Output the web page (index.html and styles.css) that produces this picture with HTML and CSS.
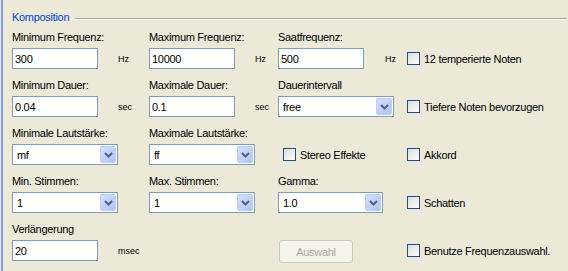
FILE: index.html
```html
<!DOCTYPE html>
<html lang="de">
<head>
  <meta charset="UTF-8">
  <title>Komposition</title>
  <link rel="stylesheet" href="styles.css">
</head>
<body>

<div class="frame">
  <div class="legend">
    <span class="legend-title">Komposition</span>
    <div class="legend-line"></div>
  </div>

  <div class="grid">
    <!-- Row 1 -->
    <div class="cell">
      <div class="label">Minimum Frequenz:</div>
      <div class="control"><input class="field" type="text" value="300"><span class="unit">Hz</span></div>
    </div>
    <div class="cell">
      <div class="label">Maximum Frequenz:</div>
      <div class="control"><input class="field" type="text" value="10000"><span class="unit">Hz</span></div>
    </div>
    <div class="cell">
      <div class="label">Saatfrequenz:</div>
      <div class="control"><input class="field" type="text" value="500"><span class="unit unit-wide">Hz</span></div>
    </div>
    <div class="cell">
      <div class="control"><span class="check"><span class="box"></span>12 temperierte Noten</span></div>
    </div>

    <!-- Row 2 -->
    <div class="cell">
      <div class="label">Minimum Dauer:</div>
      <div class="control"><input class="field" type="text" value="0.04"><span class="unit">sec</span></div>
    </div>
    <div class="cell">
      <div class="label">Maximale Dauer:</div>
      <div class="control"><input class="field" type="text" value="0.1"><span class="unit">sec</span></div>
    </div>
    <div class="cell">
      <div class="label">Dauerintervall</div>
      <div class="control">
        <div class="combo combo-long"><span class="combo-text">free</span><span class="arrow"><svg width="9" height="6" viewBox="0 0 9 6"><path d="M1 1 L4.5 4.5 L8 1" fill="none" stroke="#4d6185" stroke-width="2"/></svg></span></div>
      </div>
    </div>
    <div class="cell">
      <div class="control"><span class="check"><span class="box"></span>Tiefere Noten bevorzugen</span></div>
    </div>

    <!-- Row 3 -->
    <div class="cell">
      <div class="label">Minimale Lautstärke:</div>
      <div class="control">
        <div class="combo"><span class="combo-text">mf</span><span class="arrow"><svg width="9" height="6" viewBox="0 0 9 6"><path d="M1 1 L4.5 4.5 L8 1" fill="none" stroke="#4d6185" stroke-width="2"/></svg></span></div>
      </div>
    </div>
    <div class="cell">
      <div class="label">Maximale Lautstärke:</div>
      <div class="control">
        <div class="combo"><span class="combo-text">ff</span><span class="arrow"><svg width="9" height="6" viewBox="0 0 9 6"><path d="M1 1 L4.5 4.5 L8 1" fill="none" stroke="#4d6185" stroke-width="2"/></svg></span></div>
      </div>
    </div>
    <div class="cell">
      <div class="control"><span class="check check-inset"><span class="box"></span>Stereo Effekte</span></div>
    </div>
    <div class="cell">
      <div class="control"><span class="check"><span class="box"></span>Akkord</span></div>
    </div>

    <!-- Row 4 -->
    <div class="cell">
      <div class="label">Min. Stimmen:</div>
      <div class="control">
        <div class="combo"><span class="combo-text">1</span><span class="arrow"><svg width="9" height="6" viewBox="0 0 9 6"><path d="M1 1 L4.5 4.5 L8 1" fill="none" stroke="#4d6185" stroke-width="2"/></svg></span></div>
      </div>
    </div>
    <div class="cell">
      <div class="label">Max. Stimmen:</div>
      <div class="control">
        <div class="combo"><span class="combo-text">1</span><span class="arrow"><svg width="9" height="6" viewBox="0 0 9 6"><path d="M1 1 L4.5 4.5 L8 1" fill="none" stroke="#4d6185" stroke-width="2"/></svg></span></div>
      </div>
    </div>
    <div class="cell">
      <div class="label">Gamma:</div>
      <div class="control">
        <div class="combo combo-mid"><span class="combo-text">1.0</span><span class="arrow"><svg width="9" height="6" viewBox="0 0 9 6"><path d="M1 1 L4.5 4.5 L8 1" fill="none" stroke="#4d6185" stroke-width="2"/></svg></span></div>
      </div>
    </div>
    <div class="cell">
      <div class="control"><span class="check"><span class="box"></span>Schatten</span></div>
    </div>

    <!-- Row 5 -->
    <div class="cell">
      <div class="label">Verlängerung</div>
      <div class="control"><input class="field" type="text" value="20"><span class="unit">msec</span></div>
    </div>
    <div class="cell"></div>
    <div class="cell">
      <div class="control"><button class="btn" disabled>Auswahl</button></div>
    </div>
    <div class="cell">
      <div class="control"><span class="check"><span class="box"></span>Benutze Frequenzauswahl.</span></div>
    </div>
  </div>
</div>

</body>
</html>
```

FILE: styles.css
```css
body {
  margin: 0;
  background-color: #ece9d8;
  font-family: 'Liberation Sans', Arial, sans-serif;
  font-size: 11px;
  letter-spacing: -0.3px;
  color: #000000;
  height: 271px;
  overflow: hidden;
}

.frame {
  margin-left: 1px;
  border-left: 2px solid #7f9be3;
  padding: 10px 1px 0 9px;
  height: 261px;
}

.legend {
  display: flex;
  height: 14px;
}

.legend-title {
  color: #0046d5;
  line-height: 14px;
  margin-right: 6px;
}

.legend-line {
  flex: 1;
  margin-top: 8px;
  height: 0;
  border-top: 1px solid #aca899;
  border-bottom: 1px solid #ffffff;
}

.grid {
  display: grid;
  grid-template-columns: 137px 129px 129px 1fr;
  row-gap: 9px;
  margin-top: 6px;
}

.cell {
  display: flex;
  flex-direction: column;
  justify-content: flex-end;
}

.label {
  line-height: 14px;
  margin-bottom: 4px;
  white-space: nowrap;
}

.control {
  display: flex;
  align-items: center;
  height: 21px;
}

.field {
  box-sizing: border-box;
  width: 86px;
  height: 21px;
  margin: 0;
  padding: 0 2px;
  border: 1px solid #7f9db9;
  background: #ffffff;
  font-family: inherit;
  font-size: 11px;
  letter-spacing: -0.3px;
  color: #000000;
  outline: none;
}

.unit {
  margin-left: 20px;
  font-size: 9px;
  letter-spacing: 0;
}

.unit-wide {
  margin-left: 21px;
}

.combo {
  box-sizing: border-box;
  display: flex;
  align-items: center;
  width: 106px;
  height: 21px;
  border: 1px solid #7f9db9;
  background: #ffffff;
  padding: 1px;
}

.combo-long {
  width: 116px;
}

.combo-mid {
  width: 105px;
}

.combo-text {
  flex: 1;
  padding-left: 3px;
}

.arrow {
  box-sizing: border-box;
  width: 16px;
  height: 17px;
  display: flex;
  align-items: center;
  justify-content: center;
  border: 1px solid #bccdf6;
  border-radius: 2px;
  background: linear-gradient(135deg, #d2defc, #b1c6f6);
}

.check {
  display: flex;
  align-items: center;
  white-space: nowrap;
}

.check-inset {
  margin-left: 5px;
}

.box {
  box-sizing: border-box;
  width: 13px;
  height: 13px;
  margin-right: 4px;
  border: 1px solid #1c5180;
  background: linear-gradient(135deg, #dcdcd7, #ffffff);
}

.btn {
  box-sizing: border-box;
  width: 74px;
  height: 23px;
  margin: 2px 0 0 1px;
  border: 1px solid #c9c7ba;
  border-radius: 3px;
  background: #f5f4ea;
  color: #aca899;
  font-family: inherit;
  font-size: 11px;
  letter-spacing: -0.3px;
  padding: 0;
}
```
